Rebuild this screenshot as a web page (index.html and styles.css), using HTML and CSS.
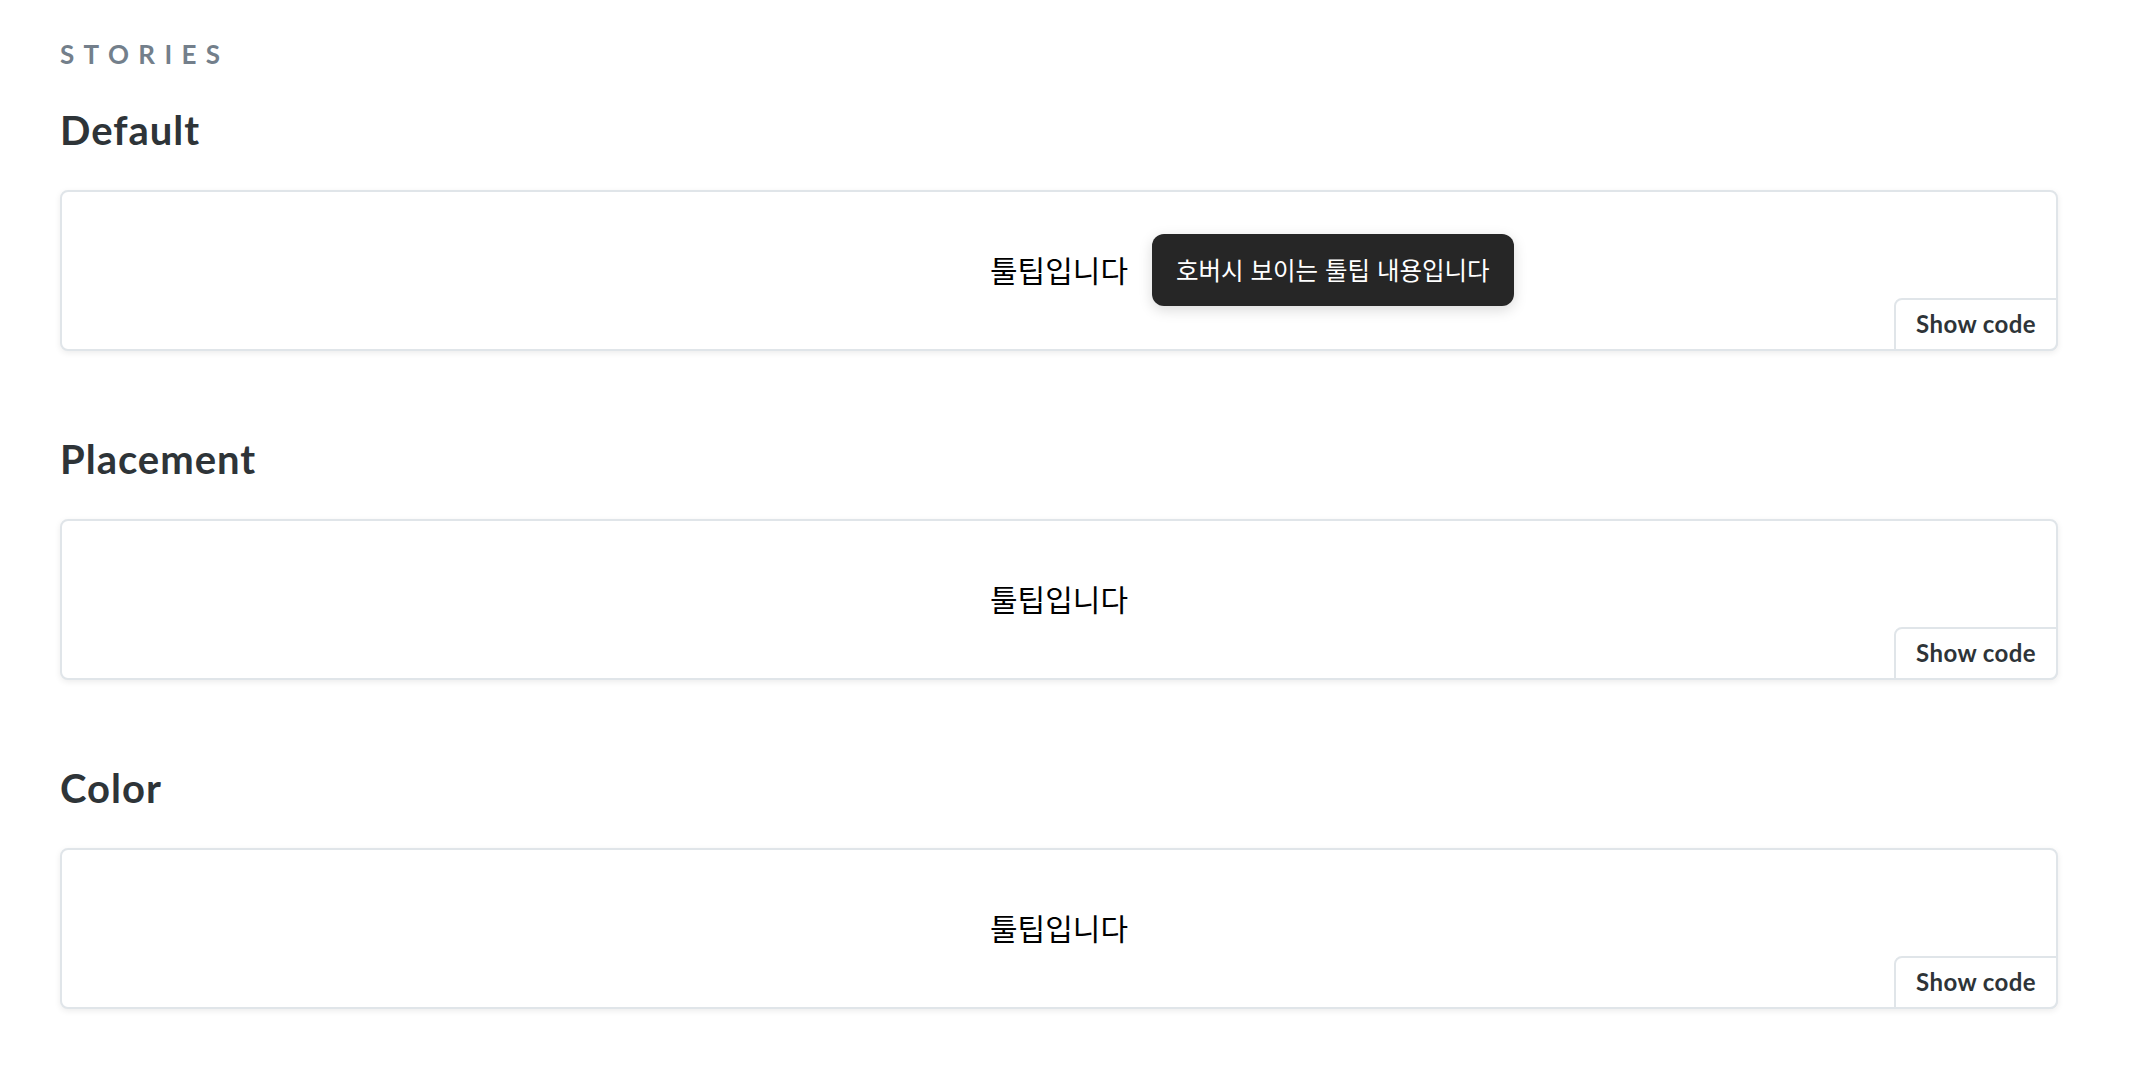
FILE: index.html
```html
<!DOCTYPE html>
<html lang="ko">
<head>
<meta charset="utf-8">
<title>Tooltip Stories</title>
<link rel="stylesheet" href="styles.css">
</head>
<body>
<main class="docs">
  <h2 class="subheading">Stories</h2>

  <section class="story">
    <h3 class="story-title">Default</h3>
    <div class="preview">
      <div class="preview-inner">
        <span class="trigger">툴팁입니다
          <span class="tooltip">호버시 보이는 툴팁 내용입니다</span>
        </span>
      </div>
      <button class="show-code">Show code</button>
    </div>
  </section>

  <section class="story">
    <h3 class="story-title">Placement</h3>
    <div class="preview">
      <div class="preview-inner">
        <span class="trigger">툴팁입니다</span>
      </div>
      <button class="show-code">Show code</button>
    </div>
  </section>

  <section class="story">
    <h3 class="story-title">Color</h3>
    <div class="preview">
      <div class="preview-inner">
        <span class="trigger">툴팁입니다</span>
      </div>
      <button class="show-code">Show code</button>
    </div>
  </section>
</main>
</body>
</html>
```

FILE: styles.css
```css
* { box-sizing: border-box; }

html, body {
  margin: 0;
  padding: 0;
  background: #ffffff;
}

body {
  font-family: "Lato", "Noto Sans", "Noto Sans CJK KR", sans-serif;
  color: #2e3438;
}

.docs {
  padding: 38px 80px 40px 60px;
}

.subheading {
  margin: 0;
  font-size: 26px;
  line-height: 32px;
  font-weight: 700;
  letter-spacing: 0.36em;
  text-transform: uppercase;
  color: #737f8b;
}

.story-title {
  margin: 36px 0 36px;
  font-size: 40px;
  line-height: 48px;
  font-weight: 700;
  letter-spacing: 1px;
  color: #2e3438;
}

.story + .story .story-title {
  margin-top: 84px;
}

.preview {
  position: relative;
  border: 2px solid #e0e5e9;
  border-radius: 8px;
  background: #ffffff;
  box-shadow: 0 2px 6px rgba(0, 0, 0, 0.08);
}

.preview-inner {
  display: flex;
  justify-content: center;
  align-items: center;
  padding: 59px 40px 61px;
  min-height: 157px;
}

.trigger {
  position: relative;
  font-family: "Noto Sans CJK KR", sans-serif;
  font-size: 30px;
  line-height: 37px;
  color: #000000;
}

.tooltip {
  position: absolute;
  left: calc(100% + 24px);
  top: 50%;
  transform: translateY(-50%);
  white-space: nowrap;
  padding: 0 24px;
  height: 72px;
  display: flex;
  align-items: center;
  background: #262626;
  color: #ffffff;
  font-size: 24.5px;
  border-radius: 12px;
  box-shadow: 0 4px 14px rgba(0, 0, 0, 0.15);
}

.show-code {
  position: absolute;
  right: -2px;
  bottom: -2px;
  margin: 0;
  padding: 8px 20px 9px;
  font-family: "Lato", "Noto Sans", sans-serif;
  font-size: 24px;
  line-height: 32px;
  font-weight: 700;
  letter-spacing: 0.4px;
  color: #2e3438;
  background: #ffffff;
  border: 2px solid #e0e5e9;
  border-radius: 8px 0 8px 0;
  cursor: pointer;
}
```
